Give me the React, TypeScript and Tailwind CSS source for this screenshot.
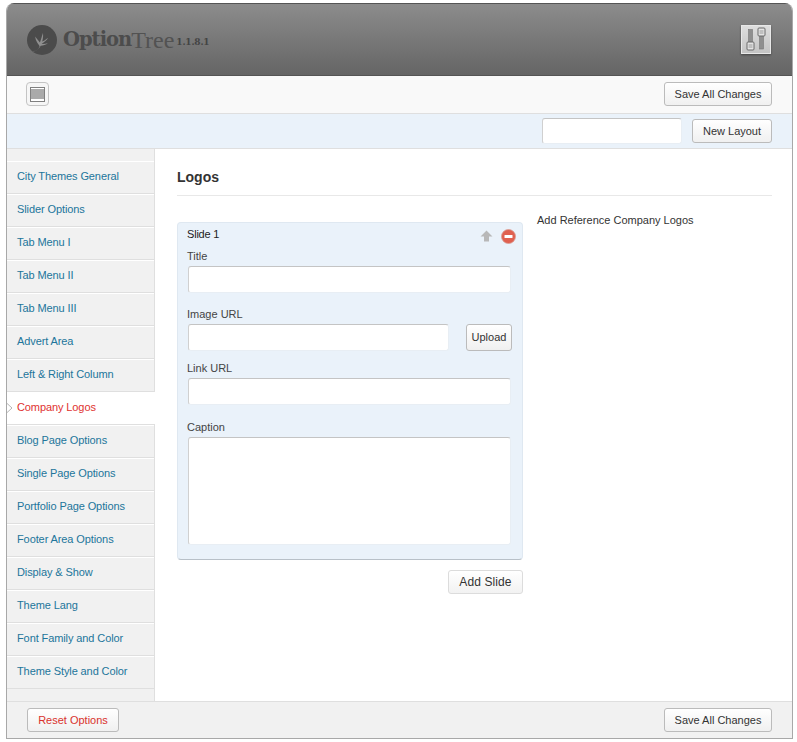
const menu = [
  "City Themes General",
  "Slider Options",
  "Tab Menu I",
  "Tab Menu II",
  "Tab Menu III",
  "Advert Area",
  "Left & Right Column",
  "Company Logos",
  "Blog Page Options",
  "Single Page Options",
  "Portfolio Page Options",
  "Footer Area Options",
  "Display & Show",
  "Theme Lang",
  "Font Family and Color",
  "Theme Style and Color",
];

function Btn({ label, className = "" }: { label: string; className?: string }) {
  return (
    <button
      className={
        "flex items-center justify-center rounded-[3px] border border-[#bbb] bg-gradient-to-b from-white to-[#f0f0f0] text-[11px] text-[#333] " +
        className
      }
    >
      {label}
    </button>
  );
}

function Field({ className = "" }: { className?: string }) {
  return (
    <div
      className={
        "rounded-[3px] border border-[#e8eef4] border-t-[#c4c4c4] border-l-[#d0d0d0] bg-white " + className
      }
    />
  );
}

function TreeLogo() {
  return (
    <svg width="30" height="30" viewBox="0 0 30 30">
      <circle cx="15" cy="15" r="15" fill="#4b4b4b" />
      <path
        transform="rotate(12 15 15)"
        d="M9 28c3-1.500 4.500-3.500 5-6.500-1.500-1.500-5-4-6.500-8.500 2 1.500 4 3.500 6 5 .5-3 .5-6.500 1-10 1 3 1.200 5.500 1 8.500 1.500-1 3-2.500 5-5-.5 2.500-3 5-5 7.500 2-.2 4-1 6-2-1.500 2-4.500 3.500-6.500 4-1 3-3 6-6.500 7z"
        fill="#8f8f8f"
      />
    </svg>
  );
}

function SettingsIcon() {
  return (
    <div className="flex h-[29px] w-[30px] items-center justify-center border border-[#e8e8e8] bg-gradient-to-b from-[#dedede] to-[#c4c4c4] shadow-[0_1px_2px_rgba(0,0,0,0.4)]">
      <svg width="24" height="25" viewBox="0 0 24 25">
        <rect x="4.500" y="2.500" width="4" height="15" fill="#8f8f8f" stroke="#777" strokeWidth="0.6" />
        <rect x="3" y="15" width="7" height="8" rx="1" fill="#e4e4e4" stroke="#6a6a6a" />
        <path d="M4.500 18h4M4.500 20h4" stroke="#888" strokeWidth="0.8" />
        <rect x="15.500" y="6" width="4" height="16" fill="#8f8f8f" stroke="#777" strokeWidth="0.6" />
        <rect x="14" y="1" width="7" height="8" rx="1" fill="#e4e4e4" stroke="#6a6a6a" />
        <path d="M15.500 4h4M15.500 6h4" stroke="#888" strokeWidth="0.8" />
      </svg>
    </div>
  );
}

function SidebarItem({ label }: { label: string }) {
  const active = label === "Company Logos";
  if (active) {
    return (
      <div className="relative z-10 -mr-px flex h-[33px] items-center border-b border-[#dfdfdf] bg-white pb-[2px] pl-[10px] tracking-[-0.1px]">
        <span className="text-[#e0322f]">{label}</span>
        <svg className="absolute left-[-2px] top-[10px]" width="8" height="12" viewBox="0 0 8 12">
          <path d="M1 0.500L7 6L1 11.500" fill="#fff" stroke="#b5b5b5" />
        </svg>
      </div>
    );
  }
  return (
    <div className="flex h-[33px] items-center border-b border-t border-b-[#dfdfdf] border-t-white pb-[2px] pl-[10px] tracking-[-0.1px] text-[#21759b]">
      {label}
    </div>
  );
}

export default function App() {
  return (
    <div className="h-[742px] w-[797px] bg-white pl-[6px] pr-[4px] pt-[3px] font-['Liberation_Sans',Arial,sans-serif] text-[11px] text-[#333]">
      <div className="flex h-[736px] w-[787px] flex-col overflow-hidden rounded-t-[8px] border border-t-0 border-[#a8a8a8]">
        {/* header */}
        <div className="flex h-[73px] shrink-0 items-center justify-between border-b border-t border-b-[#555] border-t-[#555] bg-gradient-to-b from-[#8c8c8c] to-[#656565] pl-[20px] pr-[21px]">
          <div className="flex items-center">
            <TreeLogo />
            <span className="ml-[6px] font-['DejaVu_Serif',serif] text-[19.500px] font-bold leading-none tracking-[-1px] text-[#4c4c4c]">
              Option
            </span>
            <span className="font-['Liberation_Serif',serif] text-[24px] leading-none text-[#525252]">Tree</span>
            <span className="ml-[2px] mt-[6px] font-['DejaVu_Serif',serif] text-[9px] font-bold leading-none tracking-[-0.2px] text-[#444]">
              1.1.8.1
            </span>
          </div>
          <SettingsIcon />
        </div>

        {/* toolbar */}
        <div className="flex h-[38px] shrink-0 items-center justify-between border-b border-[#dfdfdf] bg-[#f9f9f9] pb-[1px] pl-[19px] pr-[20px]">
          <div className="flex h-[24px] w-[23px] items-center justify-center rounded-[4px] border border-[#c4c4c4] bg-[#f6f6f6]">
            <div className="flex h-[15px] w-[15px] items-center justify-center border border-[#808080] bg-white">
              <div className="h-[10px] w-[13px] bg-[#aaa]" />
            </div>
          </div>
          <Btn label="Save All Changes" className="h-[24px] w-[108px]" />
        </div>

        {/* layouts bar */}
        <div className="flex h-[35px] shrink-0 items-center justify-end gap-[10px] border-b border-[#dfdfdf] bg-[#eaf2fa] pr-[20px]">
          <Field className="h-[26px] w-[140px]" />
          <Btn label="New Layout" className="h-[24px] w-[80px]" />
        </div>

        {/* body */}
        <div className="flex min-h-0 flex-1">
          <div className="w-[148px] shrink-0 border-r border-[#dfdfdf] bg-[#f1f1f1] pt-[12px]">
            {menu.map((m) => (
              <SidebarItem key={m} label={m} />
            ))}
          </div>

          <div className="min-w-0 flex-1 pl-[22px] pr-[20px]">
            <div className="flex h-[47px] items-end border-b border-[#e8e8e8] pb-[11px] text-[14px] font-bold leading-[14px] text-[#333]">
              Logos
            </div>
            <div className="mt-[17px] flex">
              <div className="w-[346px] shrink-0 pt-[9px]">
                <div className="h-[338px] rounded-[4px] border border-[#dfe8f1] border-b-[#b8c0c8] bg-[#eaf2fa] pl-[9px] pr-[10px] pt-[3px]">
                  <div className="flex h-[16px] items-center justify-between">
                    <span className="tracking-[-0.2px] text-[#222]">Slide 1</span>
                    <div className="-mr-[4px] mt-[4px] flex items-center gap-[8px]">
                      <svg width="13" height="12" viewBox="0 0 13 12">
                        <path d="M6.500 0.500L12.500 6.500H9V11.500H4V6.500H0.500z" fill="#b8b8b8" />
                      </svg>
                      <svg width="15" height="15" viewBox="0 0 15 15">
                        <circle cx="7.500" cy="7.500" r="7" fill="#e0604f" stroke="#d99c92" strokeWidth="0.8" />
                        <rect x="3.500" y="6" width="8" height="3" rx="0.500" fill="#fff" />
                      </svg>
                    </div>
                  </div>
                  <div className="mt-[6px] h-[16px] leading-[16px] text-[#444]">Title</div>
                  <Field className="ml-px mt-[2px] h-[27px] w-[323px]" />
                  <div className="mt-[13px] h-[16px] leading-[16px] text-[#444]">Image URL</div>
                  <div className="mt-[2px] flex items-center justify-between">
                    <Field className="ml-px h-[27px] w-[261px]" />
                    <Btn label="Upload" className="h-[27px] w-[46px]" />
                  </div>
                  <div className="mt-[9px] h-[16px] leading-[16px] text-[#444]">Link URL</div>
                  <Field className="ml-px mt-[2px] h-[27px] w-[323px]" />
                  <div className="mt-[14px] h-[16px] leading-[16px] text-[#444]">Caption</div>
                  <Field className="ml-px mt-[2px] h-[108px] w-[323px]" />
                </div>
                <div className="mt-[10px] flex justify-end">
                  <div className="flex h-[24px] w-[75px] items-center justify-center rounded-[3px] border border-[#dcdcdc] bg-gradient-to-b from-white to-[#f2f2f2] text-[12px] tracking-[0.1px] text-[#333]">
                    Add Slide
                  </div>
                </div>
              </div>
              <div className="ml-[14px] leading-[14px] text-[#333]">Add Reference Company Logos</div>
            </div>
          </div>
        </div>

        {/* footer */}
        <div className="flex h-[37px] shrink-0 items-center justify-between border-t border-[#dfdfdf] bg-[#f1f1f1] pl-[20px] pr-[20px]">
          <Btn label="Reset Options" className="h-[24px] w-[92px] !text-[#d9322d]" />
          <Btn label="Save All Changes" className="h-[24px] w-[108px]" />
        </div>
      </div>
    </div>
  );
}
